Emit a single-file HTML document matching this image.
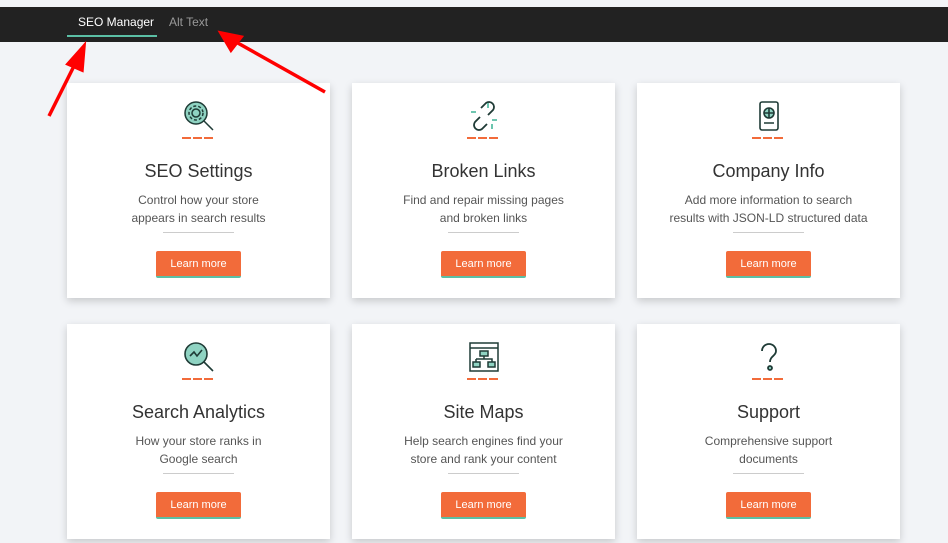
<!DOCTYPE html>
<html><head><style>
body{margin:0;width:948px;height:543px;overflow:hidden;background:#f2f4f7;font-family:"Liberation Sans",sans-serif;position:relative}
.bar{position:absolute;top:7px;left:0;width:948px;height:35px;background:#222;}
.tab{position:absolute;top:8px;font-size:12px;}
.card{position:absolute;width:263px;height:215px;background:#fff;box-shadow:0 3px 8px rgba(0,0,0,.18);text-align:center;}
.ic{position:absolute;left:115px;top:16px;width:34px;height:34px}
.dash{position:absolute;left:115px;top:54px;width:33px;height:2px;background:repeating-linear-gradient(90deg,#f26b3a 0 9px,transparent 9px 11px)}
.t{position:absolute;top:78px;width:100%;font-size:18px;color:#333}
.d{position:absolute;top:108px;width:100%;font-size:12px;line-height:18px;color:#555}
.hr{position:absolute;left:96px;top:149px;width:71px;height:1px;background:#ccc}
.b{position:absolute;left:89px;top:168px;width:85px;height:25px;background:#f26b3a;border-bottom:2px solid #5bbfa5;border-radius:2px;color:#fff;font-size:11px;line-height:27px}
</style></head><body>
<div class="bar">
<div class="tab" style="left:78px;color:#fff">SEO Manager</div>
<div class="tab" style="left:169px;color:#999">Alt Text</div>
<div style="position:absolute;left:67px;top:28px;width:90px;height:2px;background:#5bbfa5"></div>
</div>
<div class="card" style="left:67px;top:83px">
<svg class="ic" viewBox="0 0 34 34" fill="none" stroke="#1f3b36" stroke-width="1.5"><circle cx="14" cy="14" r="11" fill="#8fd3c2"/><circle cx="14" cy="14" r="4"/><circle cx="14" cy="14" r="7" stroke-dasharray="3 2"/><path d="M22 22l9 9"/></svg>
<div class="dash"></div><div class="t">SEO Settings</div><div class="d">Control how your store<br>appears in search results</div><div class="hr"></div><div class="b">Learn more</div></div>
<div class="card" style="left:352px;top:83px">
<svg class="ic" viewBox="0 0 34 34" fill="none" stroke="#1f3b36" stroke-width="1.8"><path d="M14 9l5-5a5 5 0 017 7l-5 5M20 25l-5 5a5 5 0 01-7-7l5-5"/><path d="M4 13h5M21 4v5M25 30v-5M30 21h-5" stroke="#5bbfa5"/></svg>
<div class="dash"></div><div class="t">Broken Links</div><div class="d">Find and repair missing pages<br>and broken links</div><div class="hr"></div><div class="b">Learn more</div></div>
<div class="card" style="left:637px;top:83px">
<svg class="ic" viewBox="0 0 34 34" fill="none" stroke="#1f3b36" stroke-width="1.6"><rect x="8" y="3" width="18" height="28" rx="2"/><circle cx="17" cy="14" r="5" fill="#8fd3c2"/><path d="M12 14h10M17 9v10M12 24h10"/></svg>
<div class="dash"></div><div class="t">Company Info</div><div class="d">Add more information to search<br>results with JSON-LD structured data</div><div class="hr"></div><div class="b">Learn more</div></div>
<div class="card" style="left:67px;top:324px">
<svg class="ic" viewBox="0 0 34 34" fill="none" stroke="#1f3b36" stroke-width="1.6"><circle cx="14" cy="14" r="11" fill="#8fd3c2"/><path d="M8 16l4-4 3 4 5-6"/><path d="M22 22l9 9"/></svg>
<div class="dash"></div><div class="t">Search Analytics</div><div class="d">How your store ranks in<br>Google search</div><div class="hr"></div><div class="b">Learn more</div></div>
<div class="card" style="left:352px;top:324px">
<svg class="ic" viewBox="0 0 34 34" fill="none" stroke="#1f3b36" stroke-width="1.5"><rect x="3" y="3" width="28" height="28"/><path d="M3 8h28"/><rect x="13" y="11" width="8" height="5" fill="#8fd3c2"/><path d="M17 16v3M9 19h16v3M9 19v3"/><rect x="6" y="22" width="7" height="5" fill="#8fd3c2"/><rect x="21" y="22" width="7" height="5" fill="#8fd3c2"/></svg>
<div class="dash"></div><div class="t">Site Maps</div><div class="d">Help search engines find your<br>store and rank your content</div><div class="hr"></div><div class="b">Learn more</div></div>
<div class="card" style="left:637px;top:324px">
<svg class="ic" viewBox="0 0 34 34" fill="none" stroke="#1f3b36" stroke-width="1.8"><path d="M10 11a7 7 0 1114 0c0 5-6 5-6 11" /><circle cx="18" cy="28" r="2" fill="#8fd3c2"/></svg>
<div class="dash"></div><div class="t">Support</div><div class="d">Comprehensive support<br>documents</div><div class="hr"></div><div class="b">Learn more</div></div>
<svg style="position:absolute;left:0;top:0" width="948" height="543"><g stroke="#f00" stroke-width="3.5" fill="#f00"><path d="M49 116L77 60"/><path d="M84 46L68 64L82 70Z"/><path d="M325 92L236 42"/><path d="M221 33L231 50L241 37Z"/></g></svg>
</body></html>
